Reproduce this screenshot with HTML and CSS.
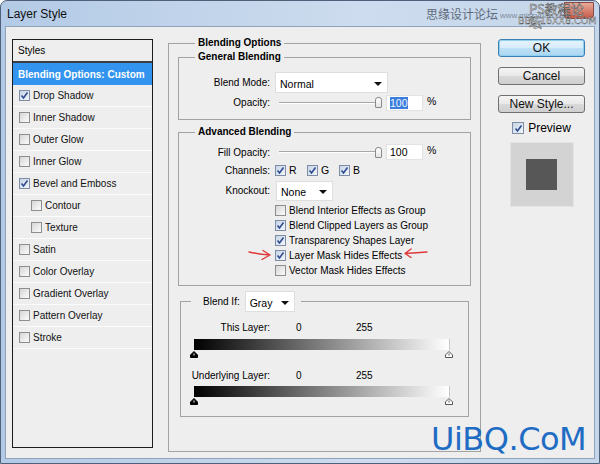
FILE: index.html
```html
<!DOCTYPE html>
<html lang="en">
<head>
  <meta charset="UTF-8" />
  <title>Layer Style</title>
  <link rel="stylesheet" href="styles.css">
</head>
<body>
  <div class="window">

    <!-- title bar -->
    <div class="titlebar">
      <span class="title">Layer Style</span>
      <div class="close-btn"></div>
      <div class="stamp-top">
        <span class="stamp-cn">思缘设计论坛</span>
        <span class="stamp-url">www.missyuan.com</span>
        <span class="stamp-ps">PS教程论坛</span>
        <span class="stamp-bbs">BBS.16XX8.COM</span>
      </div>
    </div>

    <div class="client">

      <!-- style list -->
      <div class="styles">
        <div class="styles-head">Styles</div>
        <div class="style-row active">Blending Options: Custom</div>
        <div class="style-row"><span class="cb on"><svg viewBox="0 0 9 9"><path d="M1.5 4.5 L3.5 7 L7.5 1.5"/></svg></span>Drop Shadow</div>
        <div class="style-row"><span class="cb"></span>Inner Shadow</div>
        <div class="style-row"><span class="cb"></span>Outer Glow</div>
        <div class="style-row"><span class="cb"></span>Inner Glow</div>
        <div class="style-row"><span class="cb on"><svg viewBox="0 0 9 9"><path d="M1.5 4.5 L3.5 7 L7.5 1.5"/></svg></span>Bevel and Emboss</div>
        <div class="style-row sub"><span class="cb"></span>Contour</div>
        <div class="style-row sub"><span class="cb"></span>Texture</div>
        <div class="style-row"><span class="cb"></span>Satin</div>
        <div class="style-row"><span class="cb"></span>Color Overlay</div>
        <div class="style-row"><span class="cb"></span>Gradient Overlay</div>
        <div class="style-row"><span class="cb"></span>Pattern Overlay</div>
        <div class="style-row"><span class="cb"></span>Stroke</div>
      </div>

      <!-- blending options -->
      <fieldset class="group outer">
        <legend>Blending Options</legend>

        <fieldset class="group general">
          <legend>General Blending</legend>
          <div class="row row-mode">
            <span class="lbl">Blend Mode:</span>
            <div class="select mode-select"><span>Normal</span><span class="caret"></span></div>
          </div>
          <div class="row row-opacity">
            <span class="lbl">Opacity:</span>
            <div class="slider"><div class="track"></div><div class="thumb"></div></div>
            <div class="num"><span class="sel">100</span></div>
            <span class="pct">%</span>
          </div>
        </fieldset>

        <fieldset class="group advanced">
          <legend>Advanced Blending</legend>
          <div class="row row-fill">
            <span class="lbl">Fill Opacity:</span>
            <div class="slider"><div class="track"></div><div class="thumb"></div></div>
            <div class="num">100</div>
            <span class="pct">%</span>
          </div>
          <div class="row row-channels">
            <span class="lbl">Channels:</span>
            <span class="ch"><span class="cb on"><svg viewBox="0 0 9 9"><path d="M1.5 4.5 L3.5 7 L7.5 1.5"/></svg></span>R</span>
            <span class="ch"><span class="cb on"><svg viewBox="0 0 9 9"><path d="M1.5 4.5 L3.5 7 L7.5 1.5"/></svg></span>G</span>
            <span class="ch"><span class="cb on"><svg viewBox="0 0 9 9"><path d="M1.5 4.5 L3.5 7 L7.5 1.5"/></svg></span>B</span>
          </div>
          <div class="row row-knock">
            <span class="lbl">Knockout:</span>
            <div class="select knock-select"><span>None</span><span class="caret"></span></div>
          </div>
          <div class="opts">
            <div class="opt"><span class="cb"></span>Blend Interior Effects as Group</div>
            <div class="opt"><span class="cb on"><svg viewBox="0 0 9 9"><path d="M1.5 4.5 L3.5 7 L7.5 1.5"/></svg></span>Blend Clipped Layers as Group</div>
            <div class="opt"><span class="cb on"><svg viewBox="0 0 9 9"><path d="M1.5 4.5 L3.5 7 L7.5 1.5"/></svg></span>Transparency Shapes Layer</div>
            <div class="opt marked">
              <svg class="arrow arrow-l" viewBox="0 0 24 12"><path d="M1 3 Q10 5 22 6 M15 1.5 L22 6 L14 10.5"/></svg>
              <span class="cb on"><svg viewBox="0 0 9 9"><path d="M1.5 4.5 L3.5 7 L7.5 1.5"/></svg></span>Layer Mask Hides Effects
              <svg class="arrow arrow-r" viewBox="0 0 25 12"><path d="M24 4 Q14 4.5 2 5.5 M8 1 L2 5.5 L8 9.5"/></svg>
            </div>
            <div class="opt"><span class="cb"></span>Vector Mask Hides Effects</div>
          </div>
        </fieldset>

        <fieldset class="group blendif">
          <legend class="blendif-legend">
            <span>Blend If:</span>
            <div class="select gray-select"><span>Gray</span><span class="caret"></span></div>
          </legend>
          <div class="vals vals-this">
            <span class="lbl">This Layer:</span>
            <span class="v0">0</span>
            <span>255</span>
          </div>
          <div class="ramp"></div>
          <div class="knobs">
            <svg class="knob" viewBox="0 0 8 7"><path d="M4 0.5 L7.5 4 L7.5 6.5 L0.5 6.5 L0.5 4 Z" fill="#000" stroke="#000"/><path d="M4 2.5 L4 4.5" stroke="#fff"/></svg>
            <svg class="knob" viewBox="0 0 8 7"><path d="M4 0.5 L7.5 4 L7.5 6.5 L0.5 6.5 L0.5 4 Z" fill="#fff" stroke="#555"/><path d="M4 2.5 L4 4.5" stroke="#555"/></svg>
          </div>
          <div class="vals vals-under">
            <span class="lbl">Underlying Layer:</span>
            <span class="v0">0</span>
            <span>255</span>
          </div>
          <div class="ramp"></div>
          <div class="knobs">
            <svg class="knob" viewBox="0 0 8 7"><path d="M4 0.5 L7.5 4 L7.5 6.5 L0.5 6.5 L0.5 4 Z" fill="#000" stroke="#000"/><path d="M4 2.5 L4 4.5" stroke="#fff"/></svg>
            <svg class="knob" viewBox="0 0 8 7"><path d="M4 0.5 L7.5 4 L7.5 6.5 L0.5 6.5 L0.5 4 Z" fill="#fff" stroke="#555"/><path d="M4 2.5 L4 4.5" stroke="#555"/></svg>
          </div>
        </fieldset>
      </fieldset>

      <!-- buttons -->
      <div class="actions">
        <button class="btn default">OK</button>
        <button class="btn">Cancel</button>
        <button class="btn">New Style...</button>
        <label class="preview-check"><span class="cb on"><svg viewBox="0 0 9 9"><path d="M1.5 4.5 L3.5 7 L7.5 1.5"/></svg></span>Preview</label>
        <div class="preview-box"><div class="preview-swatch"></div></div>
      </div>
    </div>

    <div class="stamp-bottom">UiBQ.CoM</div>
  </div>
</body>
</html>
```

FILE: styles.css
```css
* {
  box-sizing: border-box;
}

body {
  margin: 0;
  background: #fff;
  font-family: 'Liberation Sans', Arial, sans-serif;
  font-size: 10px;
  color: #000;
}

/* window frame */
.window {
  position: relative;
  width: 600px;
  height: 464px;
  border: 1px solid #50607a;
  border-radius: 7px 7px 0 0;
  background: linear-gradient(to right, #b3cae6, #cddcee 60%, #c5d6ea);
  padding: 0 4px 4px;
  display: flex;
  flex-direction: column;
  overflow: hidden;
}

.titlebar {
  height: 25px;
  display: flex;
  align-items: center;
  padding-left: 2px;
}

.title {
  font-size: 12px;
  color: #111;
}

.close-btn {
  position: absolute;
  top: 1px;
  right: 5px;
  width: 30px;
  height: 17px;
  border-radius: 0 0 4px 4px;
  background: linear-gradient(#e9a99a, #c75a48);
  border: 1px solid #8a4a44;
}

/* watermark stamped over the title bar */
.stamp-top {
  position: absolute;
  top: 0;
  left: 425px;
  width: 170px;
  height: 26px;
  font-size: 12px;
}

.stamp-cn {
  position: absolute;
  left: 0;
  top: 7px;
  color: #5e6b7c;
  font-family: 'Noto Sans CJK SC', sans-serif;
  font-size: 12px;
  line-height: 12px;
}

.stamp-url {
  position: absolute;
  left: 74px;
  top: 10px;
  color: #7f8b99;
  font-size: 8px;
  line-height: 9px;
}

.stamp-ps {
  position: absolute;
  left: 103px;
  top: 1px;
  font-family: 'Noto Sans CJK SC', sans-serif;
  font-size: 13px;
  line-height: 13px;
  color: #f4f4f4;
  -webkit-text-stroke: 0.5px #4a4a4a;
}

.stamp-bbs {
  position: absolute;
  left: 92px;
  top: 15px;
  font-family: 'DejaVu Sans', sans-serif;
  font-size: 9.5px;
  line-height: 10px;
  color: #f4f4f4;
  -webkit-text-stroke: 0.4px #4a4a4a;
}

.stamp-bottom {
  position: absolute;
  left: 430px;
  top: 418px;
  font-family: 'DejaVu Sans', sans-serif;
  font-size: 32px;
  line-height: 40px;
  color: #1f6cc4;
  letter-spacing: -0.5px;
}

.client {
  flex: 1;
  border: 1px solid #8fa3bb;
  background: #eeeeee;
  display: flex;
  align-items: flex-start;
  padding: 12px 0 0 6px;
}

/* checkbox */
.cb {
  display: inline-flex;
  align-items: center;
  justify-content: center;
  width: 11px;
  height: 11px;
  border: 1px solid #8e8e8e;
  background: linear-gradient(135deg, #d6d6d6, #fbfbfb);
  flex-shrink: 0;
}

.cb.on {
  background: linear-gradient(135deg, #c7d4e6, #f2f6fb);
  border-color: #7e8da6;
}

.cb svg {
  width: 9px;
  height: 9px;
}

.cb svg path {
  fill: none;
  stroke: #2e4c8f;
  stroke-width: 1.6;
}

/* style list */
.styles {
  width: 141px;
  height: 409px;
  border: 1px solid #1c1c1c;
  background: #eeeeee;
}

.styles-head {
  height: 23px;
  line-height: 21px;
  padding-left: 5px;
  border-bottom: 2px solid #3c3c3c;
}

.style-row {
  height: 22px;
  display: flex;
  align-items: center;
  gap: 3px;
  padding-left: 6px;
  border-bottom: 1px solid #fbfbfb;
  color: #111;
}

.style-row.sub {
  padding-left: 18px;
}

.style-row.active {
  background: #3394f0;
  color: #fff;
  font-weight: bold;
  padding-left: 5px;
  border-bottom: none;
}

/* group boxes */
.group {
  margin: 0;
  padding: 0;
  min-width: 0;
  border: 1px solid #a2a2a2;
}

.group legend {
  font-weight: bold;
  line-height: 14px;
  padding: 0 3px;
}

.outer {
  width: 313px;
  height: 416px;
  margin: -3px 0 0 15px;
  padding: 0 9px;
}

.outer > legend {
  margin-left: 17px;
}

.general {
  height: 70px;
  margin-top: 0;
}

.general > legend,
.advanced > legend {
  margin-left: 16px;
}

.row {
  display: flex;
  align-items: center;
}

.lbl {
  width: 91px;
  text-align: right;
  margin-right: 5px;
  flex-shrink: 0;
}

.row-mode {
  height: 21px;
  margin-top: 8px;
}

.row-opacity {
  height: 19px;
}

.select {
  display: flex;
  align-items: center;
  justify-content: space-between;
  height: 21px;
  background: #fff;
  border: 1px solid #dedede;
  padding: 2px 5px 0 4px;
  font-size: 10.5px;
}

.mode-select {
  width: 113px;
}

.caret {
  width: 0;
  height: 0;
  border-left: 4px solid transparent;
  border-right: 4px solid transparent;
  border-top: 4px solid #111;
}

.slider {
  display: flex;
  align-items: center;
  width: 103px;
  margin-left: 4px;
}

.track {
  flex: 1;
  height: 2px;
  border-top: 1px solid #a8a8a8;
  border-bottom: 1px solid #fff;
}

.thumb {
  width: 7px;
  height: 11px;
  margin-left: -2px;
  border: 1px solid #8a8a8a;
  border-radius: 3px 3px 1px 1px;
  background: linear-gradient(#fff, #e4e4e4);
}

.num {
  width: 37px;
  height: 16px;
  margin-left: 4px;
  background: #fff;
  border: 1px solid #e2e2e2;
  padding: 1px 0 0 3px;
  font-size: 10.5px;
  line-height: 13px;
}

.sel {
  background: #3b7fdc;
  color: #eef4ff;
}

.pct {
  margin-left: 4px;
  font-size: 10.5px;
  margin-top: -4px;
}

.advanced {
  height: 161px;
  margin-top: 5px;
}

.row-fill {
  height: 16px;
  margin-top: 5px;
}

.row-channels {
  height: 18px;
  margin-top: 1px;
}

.ch {
  display: flex;
  align-items: center;
  gap: 3px;
  width: 32px;
  font-size: 10.5px;
}

.row-knock {
  height: 21px;
  margin-top: 1px;
}

.knock-select {
  width: 57px;
  height: 20px;
  margin-left: 1px;
}

.opts {
  margin: 2px 0 0 96px;
}

.opt {
  height: 15px;
  display: flex;
  align-items: center;
  gap: 3px;
  font-size: 10px;
}

.opt.marked {
  position: relative;
}

/* red annotation arrows */
.arrow {
  position: absolute;
  height: 12px;
}

.arrow path {
  fill: none;
  stroke: #e0393b;
  stroke-width: 1.4;
  stroke-linecap: round;
  stroke-linejoin: round;
}

.arrow-l {
  left: -27px;
  top: 1px;
  width: 24px;
}

.arrow-r {
  left: 128px;
  top: 0;
  width: 25px;
}

/* blend if */
.blendif {
  height: 126px;
  margin: 5px 2px 0;
}

.blendif-legend {
  display: flex;
  align-items: center;
  gap: 5px;
  margin-left: 10px;
  padding: 0 6px 0 12px !important;
  font-weight: normal !important;
}

.gray-select {
  width: 50px;
}

.vals {
  display: flex;
  align-items: center;
  height: 14px;
}

.vals .lbl {
  width: 89px;
  margin-right: 26px;
}

.v0 {
  width: 60px;
}

.vals-this {
  margin-top: 8px;
}

.vals-under {
  margin-top: 10px;
}

.ramp {
  width: 256px;
  height: 11px;
  margin: 5px 0 0 13px;
  background: linear-gradient(to right, #000, #fff);
  border-right: 1px solid #c8c8c8;
}

.vals-under + .ramp {
  margin-top: 4px;
}

.knobs {
  display: flex;
  justify-content: space-between;
  width: 263px;
  margin: 1px 0 0 9px;
}

.knob {
  width: 8px;
  height: 7px;
}

/* buttons */
.actions {
  width: 87px;
  margin-left: 17px;
  display: flex;
  flex-direction: column;
  align-items: center;
}

.btn {
  width: 87px;
  height: 18px;
  margin-bottom: 10px;
  padding: 0;
  font-family: 'Liberation Sans', Arial, sans-serif;
  font-size: 12px;
  color: #111;
  border: 1px solid #707070;
  border-radius: 3px;
  background: linear-gradient(#f4f4f4 0%, #e8e8e8 50%, #d9d9d9 51%, #cfcfcf 100%);
}

.btn.default {
  border-color: #3c7fb1;
  background: linear-gradient(#e6f3fb 0%, #d6ecf9 50%, #bfe0f6 51%, #a9d6f2 100%);
  box-shadow: inset 0 0 0 1px #8fd0f0;
}

.preview-check {
  display: flex;
  align-items: center;
  gap: 4px;
  height: 14px;
  margin-top: -2px;
  font-size: 12px;
}

.preview-check .cb {
  width: 12px;
  height: 12px;
}

.preview-box {
  width: 64px;
  height: 65px;
  margin-top: 7px;
  background: #d3d3d3;
  border: 1px solid #e4e4e4;
  display: flex;
  align-items: center;
  justify-content: center;
}

.preview-swatch {
  width: 31px;
  height: 31px;
  background: #575757;
}
```
